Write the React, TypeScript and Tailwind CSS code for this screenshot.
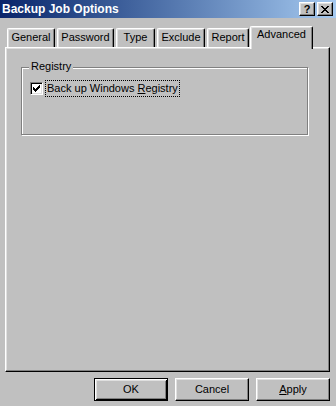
import React from 'react';

const raised =
  'border border-t-white border-l-white border-r-black border-b-black shadow-[inset_-1px_-1px_0_#808080,inset_1px_1px_0_#dfdfdf]';

const tabs = [
  { label: 'General', cls: 'ml-[2px] w-[48px]' },
  { label: 'Password', cls: 'ml-[2px] w-[57px]' },
  { label: 'Type', cls: 'ml-[2px] w-[39px]' },
  { label: 'Exclude', cls: 'ml-[2px] w-[48px]' },
  { label: 'Report', cls: 'ml-[2px] w-[42px]' },
];

const CloseGlyph = () => (
  <svg width="8" height="7" viewBox="0 0 8 7" shapeRendering="crispEdges">
    <path
      d="M0 0h2v1h-2z M6 0h2v1h-2z M1 1h2v1h-2z M5 1h2v1h-2z M2 2h4v1h-4z M3 3h2v1h-2z M2 4h4v1h-4z M1 5h2v1h-2z M5 5h2v1h-2z M0 6h2v1h-2z M6 6h2v1h-2z"
      fill="#000"
    />
  </svg>
);

const CheckGlyph = () => (
  <svg width="7" height="7" viewBox="0 0 7 7" shapeRendering="crispEdges">
    <path
      d="M6 0h1v1h-1z M5 1h2v1h-2z M0 2h1v1h-1z M4 2h3v1h-3z M0 3h2v1h-2z M3 3h3v1h-3z M0 4h5v1h-5z M1 5h3v1h-3z M2 6h1v1h-1z"
      fill="#000"
    />
  </svg>
);

export default function App() {
  return (
    <div className="w-[336px] h-[406px] bg-[#c0c0c0] flex flex-col overflow-hidden font-['Liberation_Sans',Arial,sans-serif] text-[11px] leading-[13px] text-black">
      {/* Caption */}
      <div className="h-[18px] flex items-center justify-between pl-[2px] pr-[3px] bg-gradient-to-r from-[#0a246a] to-[#a6caf0]">
        <span className="text-white font-bold text-[12px] leading-[14px]">Backup Job Options</span>
        <div className="flex gap-[2px]">
          <button className={`w-[16px] h-[14px] bg-[#c0c0c0] flex items-center justify-center ${raised}`}>
            <span className="font-bold text-[11px] leading-[11px]">?</span>
          </button>
          <button className={`w-[16px] h-[14px] bg-[#c0c0c0] flex items-center justify-center ${raised}`}>
            <CloseGlyph />
          </button>
        </div>
      </div>

      <div className="flex flex-col pl-[5px] pr-[6px] pt-[8px]">
        {/* Tabs */}
        <div className="flex items-end h-[21px]">
          {tabs.map((t) => (
            <div
              key={t.label}
              className={`h-[19px] ${t.cls} flex justify-center pt-[2px] border-t border-l border-r border-t-white border-l-white border-r-black rounded-t-[2px] shadow-[inset_-1px_0_0_#808080,inset_1px_1px_0_#dfdfdf]`}
            >
              {t.label}
            </div>
          ))}
          <div className="relative z-10 ml-[1px] w-[63px] h-[23px] -mb-[2px] bg-[#c0c0c0] flex justify-center pt-[1px] border-t border-l border-r border-t-white border-l-white border-r-black rounded-t-[2px] shadow-[inset_-1px_0_0_#808080,inset_1px_1px_0_#dfdfdf]">
            Advanced
          </div>
        </div>

        {/* Panel */}
        <div className={`h-[325px] ${raised} pl-[15px] pt-[19px]`}>
          <div className="relative w-[287px] h-[68px] border border-[#808080] shadow-[inset_1px_1px_0_#fff,1px_1px_0_#fff]">
            <span className="absolute left-[7px] -top-[8px] px-[2px] bg-[#c0c0c0]">Registry</span>
            <div className="flex items-center ml-[8px] mt-[12px]">
              <div className="w-[13px] h-[13px] bg-white border border-t-[#808080] border-l-[#808080] border-r-white border-b-white shadow-[inset_1px_1px_0_#000,inset_-1px_-1px_0_#dfdfdf] flex items-center justify-center">
                <CheckGlyph />
              </div>
              <span className="ml-[2px] h-[17px] flex items-center px-[1px] border border-dotted border-black">
                Back up Windows&nbsp;<span className="underline">R</span>egistry
              </span>
            </div>
          </div>
        </div>

        {/* Buttons */}
        <div className="flex justify-end gap-[7px] mt-[6px]">
          <button className="w-[74px] h-[23px] flex items-center justify-center border border-black shadow-[inset_1px_1px_0_#fff,inset_-1px_-1px_0_#000,inset_2px_2px_0_#dfdfdf,inset_-2px_-2px_0_#808080]">
            OK
          </button>
          <button className={`w-[74px] h-[23px] flex items-center justify-center ${raised}`}>
            Cancel
          </button>
          <button className={`w-[74px] h-[23px] flex items-center justify-center ${raised}`}>
            <span>
              <span className="underline">A</span>pply
            </span>
          </button>
        </div>
      </div>
    </div>
  );
}
